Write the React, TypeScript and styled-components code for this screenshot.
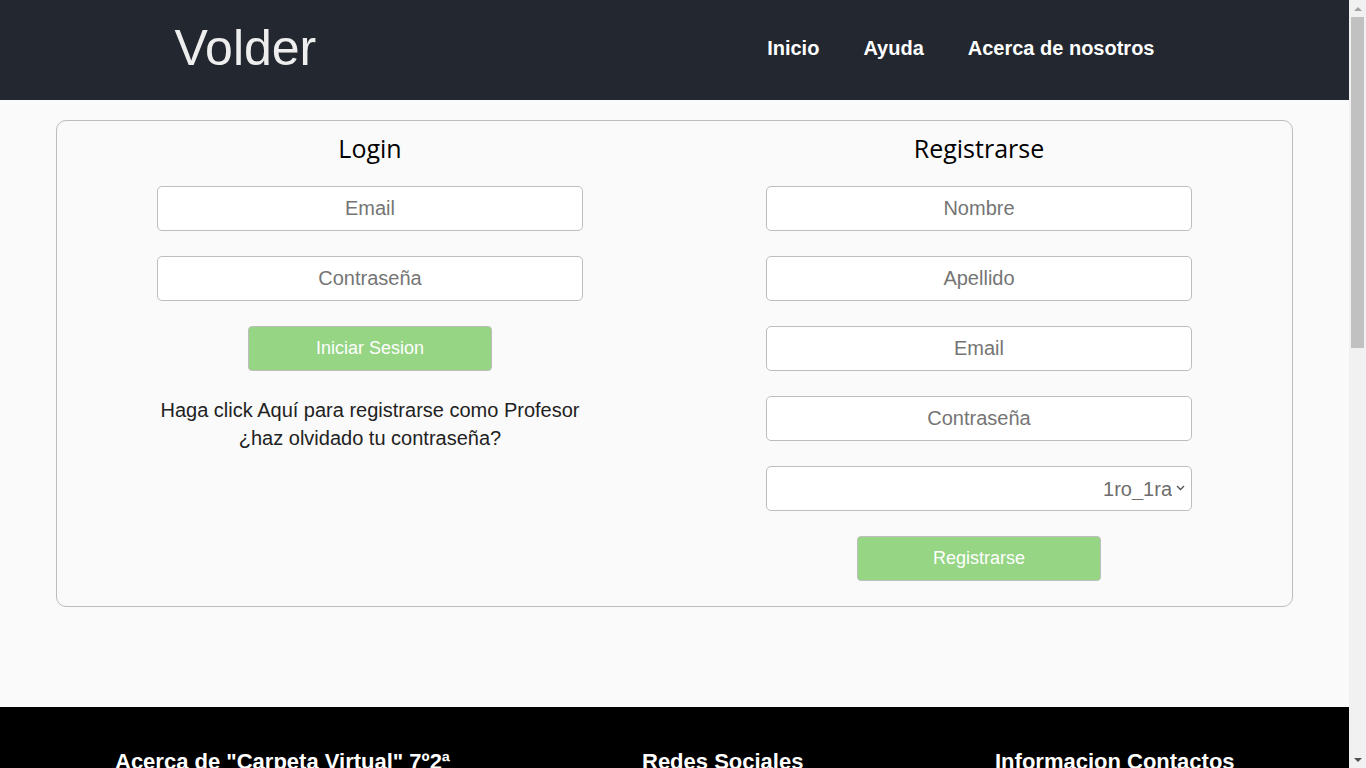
import React from "react";
import styled, { createGlobalStyle } from "styled-components";

const GlobalStyle = createGlobalStyle`
  body {
    margin: 0 17px 0 0;
    background: #fafafa;
    font-family: "Liberation Sans", Arial, sans-serif;
  }
  * {
    box-sizing: border-box;
  }
`;

// stand-in for the classic browser scrollbar seen in the screenshot
const Scrollbar = styled.div`
  position: fixed;
  top: 0;
  right: 0;
  width: 17px;
  height: 100vh;
  background: #f1f1f1;
  display: flex;
  flex-direction: column;
  align-items: center;
`;

const ScrollArrow = styled.div<{ $dir: "up" | "down"; $color: string }>`
  height: 17px;
  width: 100%;
  display: flex;
  align-items: center;
  justify-content: center;

  &::before {
    content: "";
    border-left: 4px solid transparent;
    border-right: 4px solid transparent;
    ${({ $dir, $color }) =>
      $dir === "up"
        ? `border-bottom: 4px solid ${$color};`
        : `border-top: 4px solid ${$color};`}
  }
`;

const ScrollTrack = styled.div`
  flex: 1;
  width: 100%;
  padding: 0 2px;
`;

const ScrollThumb = styled.div`
  width: 100%;
  background: #c1c1c1;
`;

const Header = styled.header`
  height: 100px;
  background: #23272f;
`;

const HeaderInner = styled.div`
  width: 1000px;
  height: 100%;
  margin: 0 auto;
  display: flex;
  align-items: center;
  justify-content: space-between;
`;

const Logo = styled.a`
  font-size: 50px;
  color: #eeeeee;
  text-decoration: none;
  margin-top: -4px;
`;

const Nav = styled.nav`
  display: flex;
  margin: -4px -2px 0 0;
`;

const NavLink = styled.a`
  padding: 0 22px;
  font-size: 20px;
  font-weight: bold;
  color: #ffffff;
  text-decoration: none;
`;

const Main = styled.main`
  padding: 20px 56px 100px;
`;

const Card = styled.section`
  border: 1px solid #bdbdbd;
  border-radius: 10px;
  padding: 10px 20px 25px;
  display: grid;
  grid-template-columns: 1fr 1fr;
  column-gap: 23px;
`;

const Column = styled.div`
  display: flex;
  flex-direction: column;
  align-items: center;
`;

const Title = styled.h2`
  margin: 0 0 21px;
  height: 34px;
  line-height: 34px;
  font-family: "Open Sans", "Noto Sans", sans-serif;
  font-weight: 500;
  font-size: 25px;
  color: #000;
`;

const Field = styled.input`
  width: 426px;
  height: 45px;
  margin-bottom: 25px;
  border: 1px solid #bdbdbd;
  border-radius: 5px;
  background: #fff;
  font-family: "Liberation Sans", Arial, sans-serif;
  font-size: 20px;
  text-align: center;
  outline: none;

  &::placeholder {
    color: #757575;
  }
`;

const SelectWrap = styled.div`
  position: relative;
  width: 426px;
  height: 45px;
  margin-bottom: 25px;
`;

const Select = styled.select`
  width: 100%;
  height: 100%;
  appearance: none;
  border: 1px solid #bdbdbd;
  border-radius: 5px;
  background: #fff;
  padding: 0 19px 0 8px;
  font-family: "Liberation Sans", Arial, sans-serif;
  font-size: 20px;
  color: #6d6d6d;
  text-align: right;
  text-align-last: right;
  outline: none;
`;

const Chevron = styled.svg`
  position: absolute;
  right: 7px;
  top: 19px;
  pointer-events: none;
`;

const SubmitButton = styled.button`
  width: 244px;
  height: 45px;
  border: 1px solid #bdbdbd;
  border-radius: 4px;
  background: #95d584;
  color: #fff;
  font-family: "Liberation Sans", Arial, sans-serif;
  font-size: 18px;
`;

const HelpText = styled.p`
  margin: 25px 0 0;
  font-size: 20px;
  line-height: 28px;
  color: #222;
  text-align: center;
`;

const Footer = styled.footer`
  background: #000;
  color: #fff;
  padding: 42px 0 60px 115px;
  min-height: 1000px;
  display: grid;
  grid-template-columns: 527px 353px 1fr;
`;

const FooterCol = styled.div`
  display: flex;
  flex-direction: column;
  gap: 12px;
`;

const FooterTitle = styled.h3`
  margin: 0 0 8px;
  font-size: 22px;
  font-weight: bold;
`;

const FooterText = styled.p`
  margin: 0;
  font-size: 16px;
  line-height: 24px;
  color: #ddd;
  max-width: 420px;
`;

export default function App() {
  return (
    <>
      <GlobalStyle />
      <Header>
        <HeaderInner>
          <Logo href="#">Volder</Logo>
          <Nav>
            <NavLink href="#">Inicio</NavLink>
            <NavLink href="#">Ayuda</NavLink>
            <NavLink href="#">Acerca de nosotros</NavLink>
          </Nav>
        </HeaderInner>
      </Header>
      <Main>
        <Card>
          <Column>
            <Title>Login</Title>
            <Field type="email" placeholder="Email" />
            <Field type="password" placeholder="Contraseña" />
            <SubmitButton>Iniciar Sesion</SubmitButton>
            <HelpText>
              Haga click Aquí para registrarse como Profesor
              <br />
              ¿haz olvidado tu contraseña?
            </HelpText>
          </Column>
          <Column>
            <Title>Registrarse</Title>
            <Field type="text" placeholder="Nombre" />
            <Field type="text" placeholder="Apellido" />
            <Field type="email" placeholder="Email" />
            <Field type="password" placeholder="Contraseña" />
            <SelectWrap>
              <Select defaultValue="1ro_1ra">
                <option>1ro_1ra</option>
                <option>1ro_2da</option>
                <option>2do_1ra</option>
              </Select>
              <Chevron width="9" height="6" viewBox="0 0 9 6">
                <path d="M1 1l3.5 3.5L8 1" fill="none" stroke="#555" strokeWidth="1.4" />
              </Chevron>
            </SelectWrap>
            <SubmitButton>Registrarse</SubmitButton>
          </Column>
        </Card>
      </Main>
      <Footer>
        <FooterCol>
          <FooterTitle>Acerca de "Carpeta Virtual" 7º2ª</FooterTitle>
          <FooterText>
            Carpeta Virtual es un espacio para que alumnos y profesores
            compartan sus trabajos y materiales.
          </FooterText>
        </FooterCol>
        <FooterCol>
          <FooterTitle>Redes Sociales</FooterTitle>
          <FooterText>Facebook</FooterText>
          <FooterText>Instagram</FooterText>
          <FooterText>Twitter</FooterText>
        </FooterCol>
        <FooterCol>
          <FooterTitle>Informacion Contactos</FooterTitle>
          <FooterText>Email: contacto@volder.com</FooterText>
          <FooterText>Teléfono: 011 4444-5555</FooterText>
        </FooterCol>
      </Footer>
      <Scrollbar>
        <ScrollArrow $dir="up" $color="#a3a3a3" />
        <ScrollTrack>
          <ScrollThumb style={{ height: 331 }} />
        </ScrollTrack>
        <ScrollArrow $dir="down" $color="#505050" />
      </Scrollbar>
    </>
  );
}
